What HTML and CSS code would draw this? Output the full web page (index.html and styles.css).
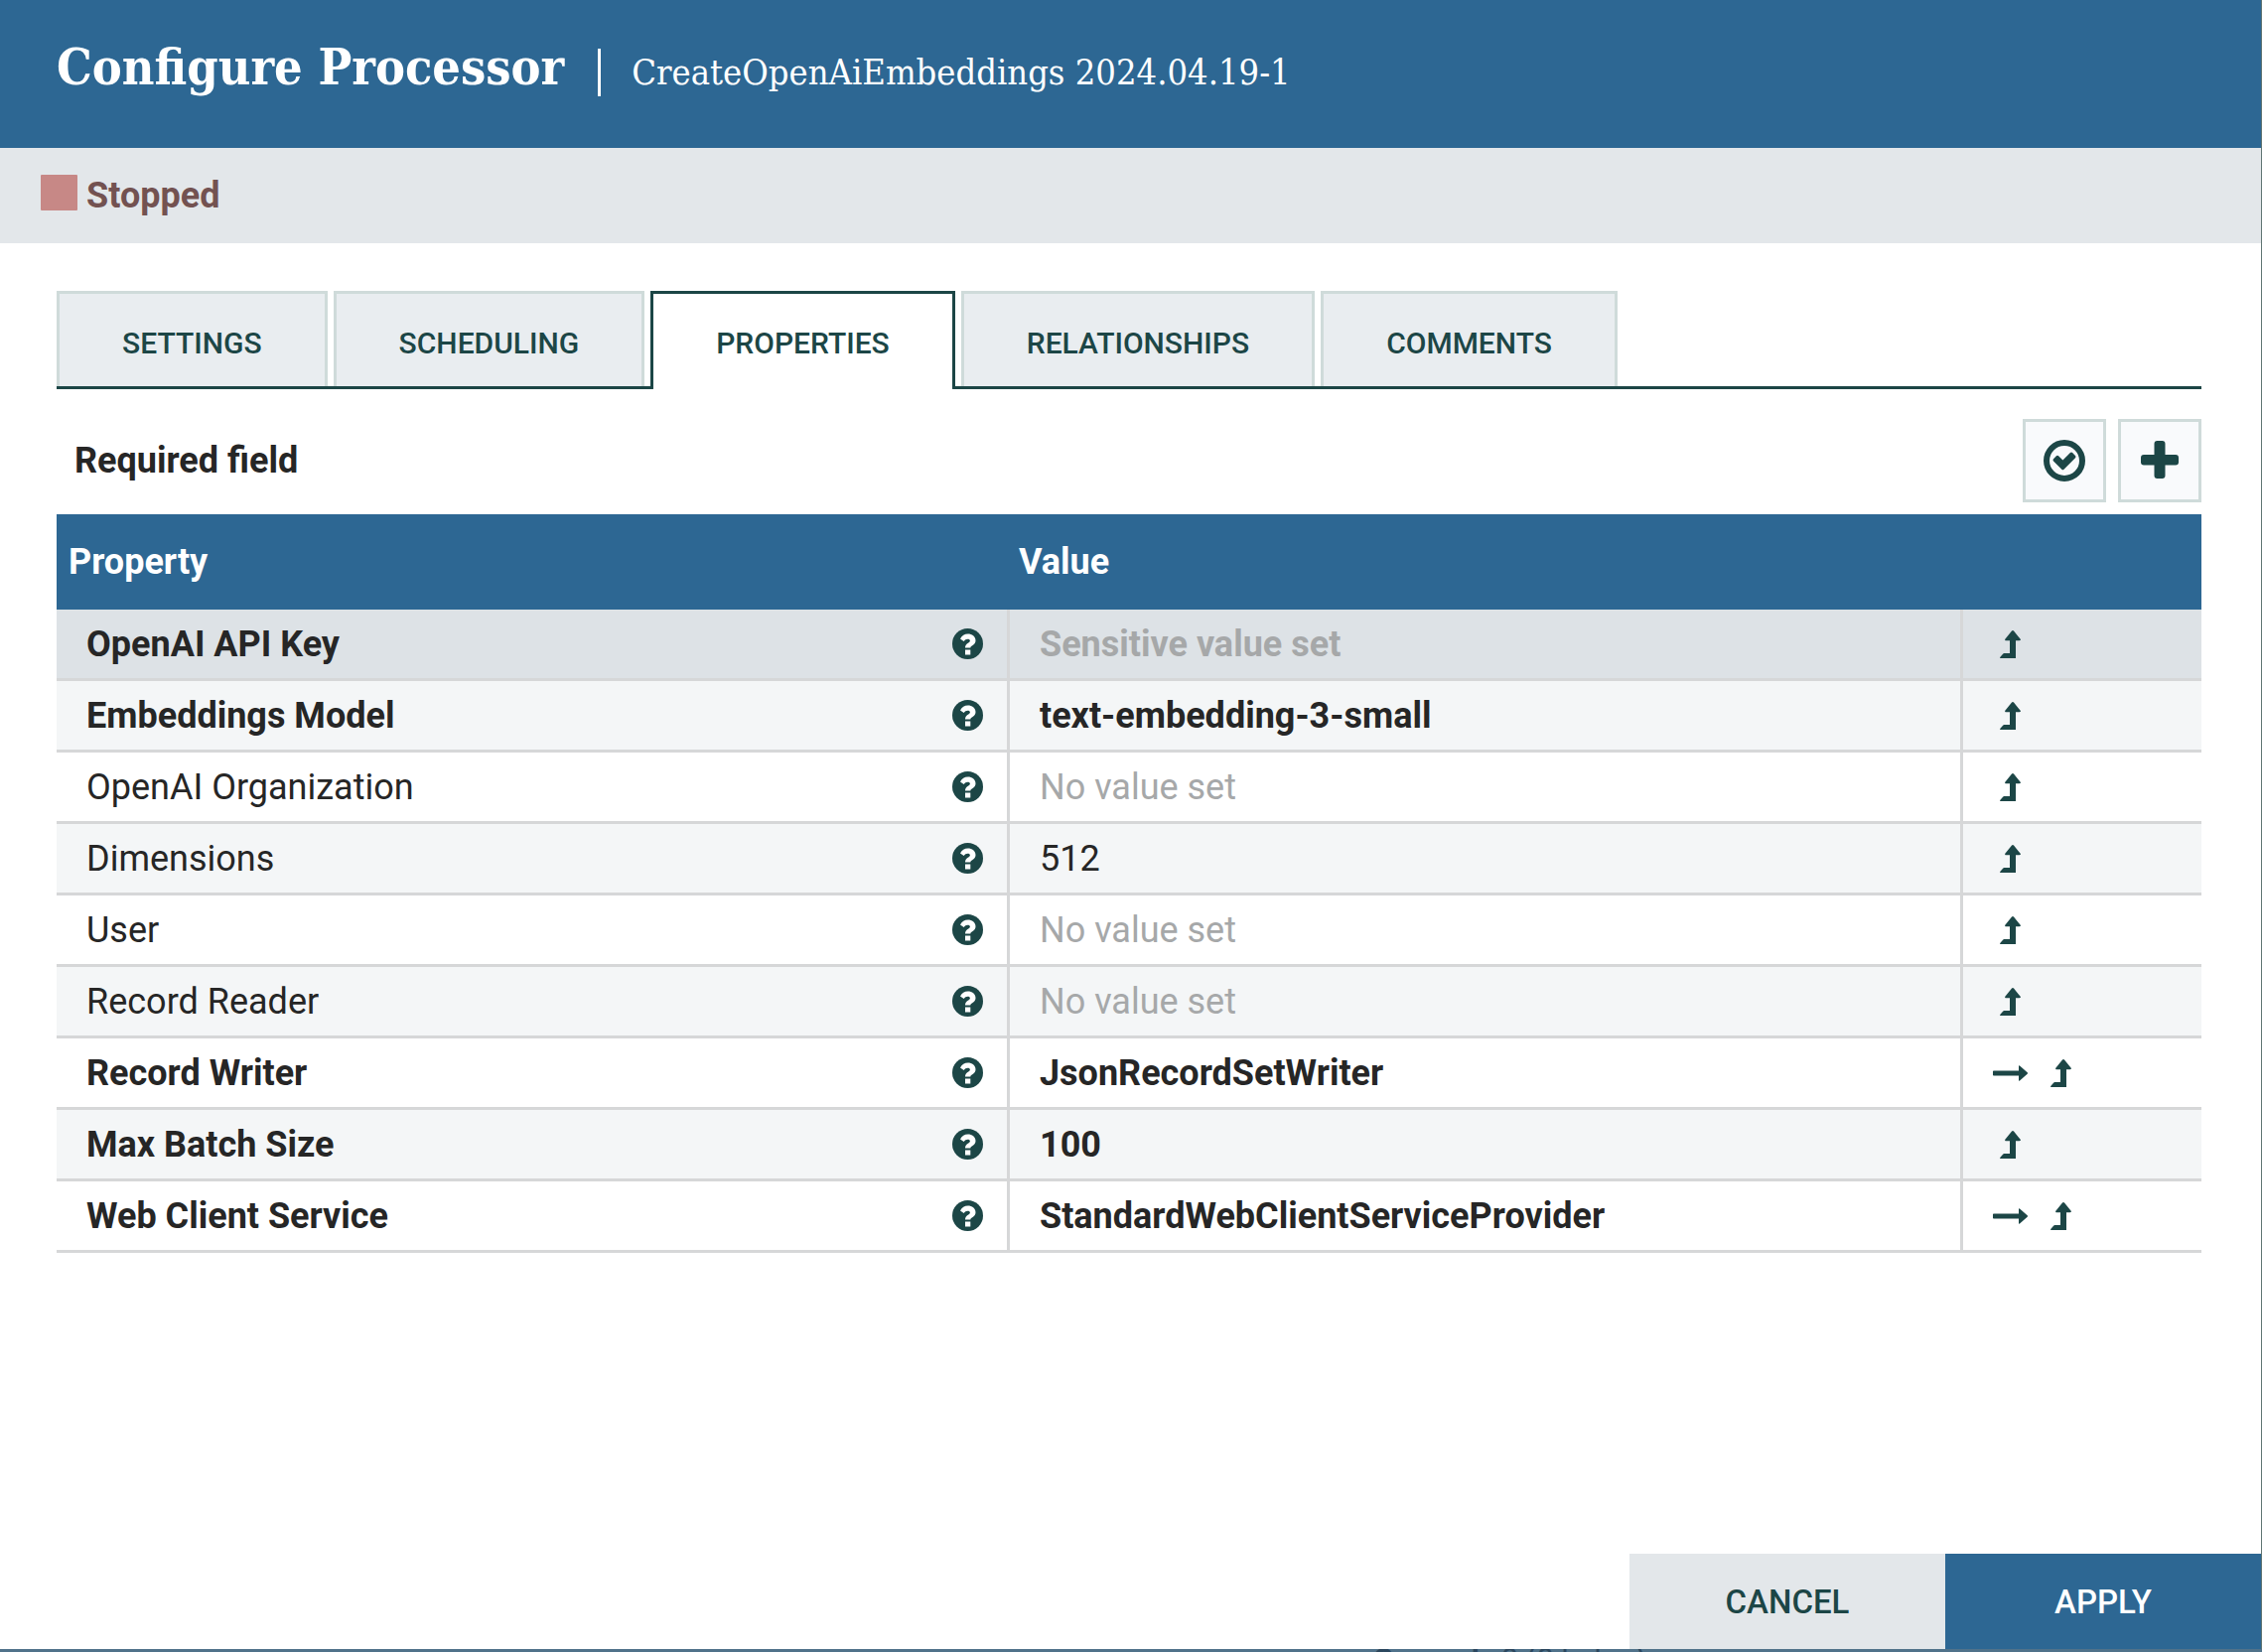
FILE: index.html
```
<!DOCTYPE html>
<html lang="en">
<head>
<meta charset="utf-8">
<title>Configure Processor</title>
<link rel="stylesheet" href="styles.css">
</head>
<body>
<svg class="sprite" aria-hidden="true">
  <symbol id="help" viewBox="0 0 31 31">
    <circle cx="15.500" cy="15.500" r="15.500"/>
    <path class="cut" d="M8 10.500C9.800 7.200 12.300 5.500 15.800 5.500c4 0 7.700 2.700 7.700 6.700 0 4.800-5.200 5-5.200 7.300h-5.300c0-4.700 4.900-5 4.900-7.100 0-1-1-1.700-2.300-1.700-1.800 0-2.800.8-3.900 2.300zM13 21.500h5.300v5H13z"/>
  </symbol>
  <symbol id="level" viewBox="0 0 21 28">
    <path d="M13 0q.6 0 1 .5l6.500 8q.6.800.3 1.200t-1.200.5H16V28H1Q-.2 28 .2 27L3.300 23.400q.4-.5 1-.5H10V10.200H6.400q-.9 0-1.200-.5t.3-1.200l6.500-8q.4-.5 1-.5z"/>
  </symbol>
  <symbol id="goto" viewBox="0 0 36 16">
    <path d="M.8 5.400H26V1q0-1.300 1-.5L34.700 7.300q.6.700 0 1.400L27 15.500q-1 .8-1-.5V10.600H.8Q0 10.600 0 9.800V6.200q0-.8.800-.8z"/>
  </symbol>
  <symbol id="check" viewBox="0 0 42 42">
    <circle class="ring" cx="21" cy="21" r="18"/>
    <path d="M32 18.200 20.500 29.700q-1.100 1.100-2.200 0L10 21.400q-1.100-1.100 0-2.200l2.900-2.900q1.100-1.100 2.200 0l4.300 4.300 7.500-7.500q1.100-1.100 2.200 0L32 16q1.100 1.100 0 2.200z"/>
  </symbol>
  <symbol id="plus" viewBox="0 0 38 38">
    <path d="M16.500 0h5q3 0 3 3v11H35q3 0 3 3v4.500q0 3-3 3H24.500V35q0 3-3 3h-5q-3 0-3-3V24.500H3q-3 0-3-3V17q0-3 3-3h10.500V3q0-3 3-3z"/>
  </symbol>
</svg>
<div class="canvas">
  <main class="dialog">
    <header class="dialog-header">
      <h1 class="title">Configure Processor</h1>
      <p class="subtitle">CreateOpenAiEmbeddings 2024.04.19-1</p>
    </header>
    <div class="status"><span class="status-icon"></span><span class="status-text">Stopped</span></div>
    <div class="content">
      <div class="tabs" role="tablist">
        <button class="tab" role="tab">SETTINGS</button>
        <button class="tab" role="tab">SCHEDULING</button>
        <button class="tab selected" role="tab" aria-selected="true">PROPERTIES</button>
        <button class="tab" role="tab">RELATIONSHIPS</button>
        <button class="tab" role="tab">COMMENTS</button>
      </div>
      <div class="toolbar">
        <span class="required-label">Required field</span>
        <div class="tools">
          <button class="tool" aria-label="Verify properties"><svg class="icon-check"><use href="#check"/></svg></button>
          <button class="tool" aria-label="Add property"><svg class="icon-plus"><use href="#plus"/></svg></button>
        </div>
      </div>
      <table class="properties">
        <colgroup><col class="col-wide"><col class="col-wide"><col class="col-actions"></colgroup>
        <thead><tr><th>Property</th><th>Value</th><th></th></tr></thead>
        <tbody>
          <tr class="active required"><td><div class="name">OpenAI API Key<svg class="icon-help"><use href="#help"/></svg></div></td><td class="unset">Sensitive value set</td><td><div class="actions"><svg class="icon-level"><use href="#level"/></svg></div></td></tr>
          <tr class="required"><td><div class="name">Embeddings Model<svg class="icon-help"><use href="#help"/></svg></div></td><td>text-embedding-3-small</td><td><div class="actions"><svg class="icon-level"><use href="#level"/></svg></div></td></tr>
          <tr><td><div class="name">OpenAI Organization<svg class="icon-help"><use href="#help"/></svg></div></td><td class="unset">No value set</td><td><div class="actions"><svg class="icon-level"><use href="#level"/></svg></div></td></tr>
          <tr><td><div class="name">Dimensions<svg class="icon-help"><use href="#help"/></svg></div></td><td>512</td><td><div class="actions"><svg class="icon-level"><use href="#level"/></svg></div></td></tr>
          <tr><td><div class="name">User<svg class="icon-help"><use href="#help"/></svg></div></td><td class="unset">No value set</td><td><div class="actions"><svg class="icon-level"><use href="#level"/></svg></div></td></tr>
          <tr><td><div class="name">Record Reader<svg class="icon-help"><use href="#help"/></svg></div></td><td class="unset">No value set</td><td><div class="actions"><svg class="icon-level"><use href="#level"/></svg></div></td></tr>
          <tr class="required"><td><div class="name">Record Writer<svg class="icon-help"><use href="#help"/></svg></div></td><td>JsonRecordSetWriter</td><td><div class="actions"><svg class="icon-goto"><use href="#goto"/></svg><svg class="icon-level"><use href="#level"/></svg></div></td></tr>
          <tr class="required"><td><div class="name">Max Batch Size<svg class="icon-help"><use href="#help"/></svg></div></td><td>100</td><td><div class="actions"><svg class="icon-level"><use href="#level"/></svg></div></td></tr>
          <tr class="required"><td><div class="name">Web Client Service<svg class="icon-help"><use href="#help"/></svg></div></td><td>StandardWebClientServiceProvider</td><td><div class="actions"><svg class="icon-goto"><use href="#goto"/></svg><svg class="icon-level"><use href="#level"/></svg></div></td></tr>
        </tbody>
      </table>
    </div>
    <footer class="dialog-footer">
      <button class="button">CANCEL</button>
      <button class="button primary">APPLY</button>
    </footer>
  </main>
  <div class="connection"><b>Queued</b><span>0 (0 bytes)</span></div>
</div>
</body>
</html>
```
FILE: styles.css
```
* { box-sizing: border-box; }

body {
  margin: 0;
  font-family: Roboto, "Liberation Sans", sans-serif;
  font-size: 36px;
  line-height: 42px;
  color: #262626;
}

.sprite { display: none; }
svg { fill: #1c4646; flex: none; }
.cut { fill: #fff; }
.ring { fill: none; stroke: #1c4646; stroke-width: 6px; }

button {
  font-family: inherit;
  font-weight: 500;
  color: #1c4646;
  border: 0;
  border-radius: 0;
  margin: 0;
}

.canvas {
  display: flex;
  flex-direction: column;
  min-height: 100vh;
  background: #50728a;
}

.dialog {
  display: flex;
  flex-direction: column;
  flex: 1;
  border-right: 1px solid #607573;
  background: #fff;
}

/* Label of the flow connection that shows below the dialog */
.connection {
  display: flex;
  gap: 22px;
  height: 3px;
  padding-left: 60.7%;
  overflow: hidden;
  font-size: 31px;
  line-height: 22px;
  color: #2b475e;
}

.dialog-header {
  display: flex;
  align-items: baseline;
  height: 149px;
  padding: 32px 57px 0;
  background: #2d6793;
  color: #fff;
  font-family: "Roboto Slab", "DejaVu Serif Condensed", "DejaVu Serif", serif;
}

.title {
  margin: 0;
  font-size: 50px;
  line-height: 72px;
  font-weight: 700;
}

.subtitle {
  margin: 0 0 0 34px;
  padding-left: 31px;
  border-left: 3px solid #fff;
  font-size: 36px;
  line-height: 48px;
}

.status {
  display: flex;
  align-items: center;
  gap: 9px;
  height: 96px;
  padding: 0 41px;
  background: #e3e7ea;
}

.status-icon {
  width: 37px;
  height: 36px;
  margin-bottom: 6px;
  border-radius: 1px;
  background: #c78886;
}

.status-text { font-weight: 700; color: #735251; }

.content { flex: 1; padding: 48px 60px 0 57px; }

.tabs {
  display: flex;
  gap: 6px;
  height: 99px;
  border-bottom: 3px solid #1c4646;
}

.tab {
  height: 96px;
  padding: 6px 63px 0;
  border: 3px solid #cfdbda;
  border-bottom: 0;
  background: #e9edf0;
  font-size: 30px;
}

.tab.selected {
  height: 99px;
  border-color: #1c4646;
  border-radius: 0 0 3px 3px;
  background: #fff;
  padding-bottom: 3px;
}

.toolbar {
  display: flex;
  justify-content: space-between;
  align-items: center;
  padding: 30px 0 12px 18px;
}

.required-label { font-weight: 700; }

.tools { display: flex; gap: 12px; }

.tool {
  display: flex;
  align-items: center;
  justify-content: center;
  width: 84px;
  height: 84px;
  padding: 0;
  border: 3px solid #cfdbda;
  background: #f9fafc;
}

.icon-check { width: 42px; height: 42px; }
.icon-plus { width: 38px; height: 38px; margin-bottom: 3px; }

.properties {
  width: 100%;
  table-layout: fixed;
  border-collapse: separate;
  border-spacing: 0;
}

.col-actions { width: 240px; }

.properties th {
  height: 96px;
  padding: 0 12px;
  background: #2d6793;
  color: #fff;
  font-weight: 700;
  text-align: left;
}

.properties th + th { padding-left: 9px; }

.properties td {
  height: 72px;
  padding: 0 24px 0 30px;
  border-right: 3px solid #d6d7d8;
  border-bottom: 3px solid #d6d7d8;
}

.properties td:last-child { border-right: 0; }
.properties tr:nth-child(even) td { background: #f4f6f7; }
.properties .active td { background: #dde2e6; }
.required td { font-weight: 700; }
.properties .unset { color: #a6a8a9; }

.name {
  display: flex;
  align-items: center;
  justify-content: space-between;
}

.icon-help { width: 31px; height: 31px; }

.actions { display: flex; align-items: center; gap: 22px; }
.icon-level { width: 21px; height: 28px; }
.icon-level:first-child { margin-left: 7px; }
.icon-goto { width: 36px; height: 16px; }

.dialog-footer { display: flex; justify-content: flex-end; }

.button {
  width: 318px;
  height: 96px;
  background: #e3e7ea;
  font-size: 33px;
}

.button.primary { background: #2d6793; color: #fff; }
```
